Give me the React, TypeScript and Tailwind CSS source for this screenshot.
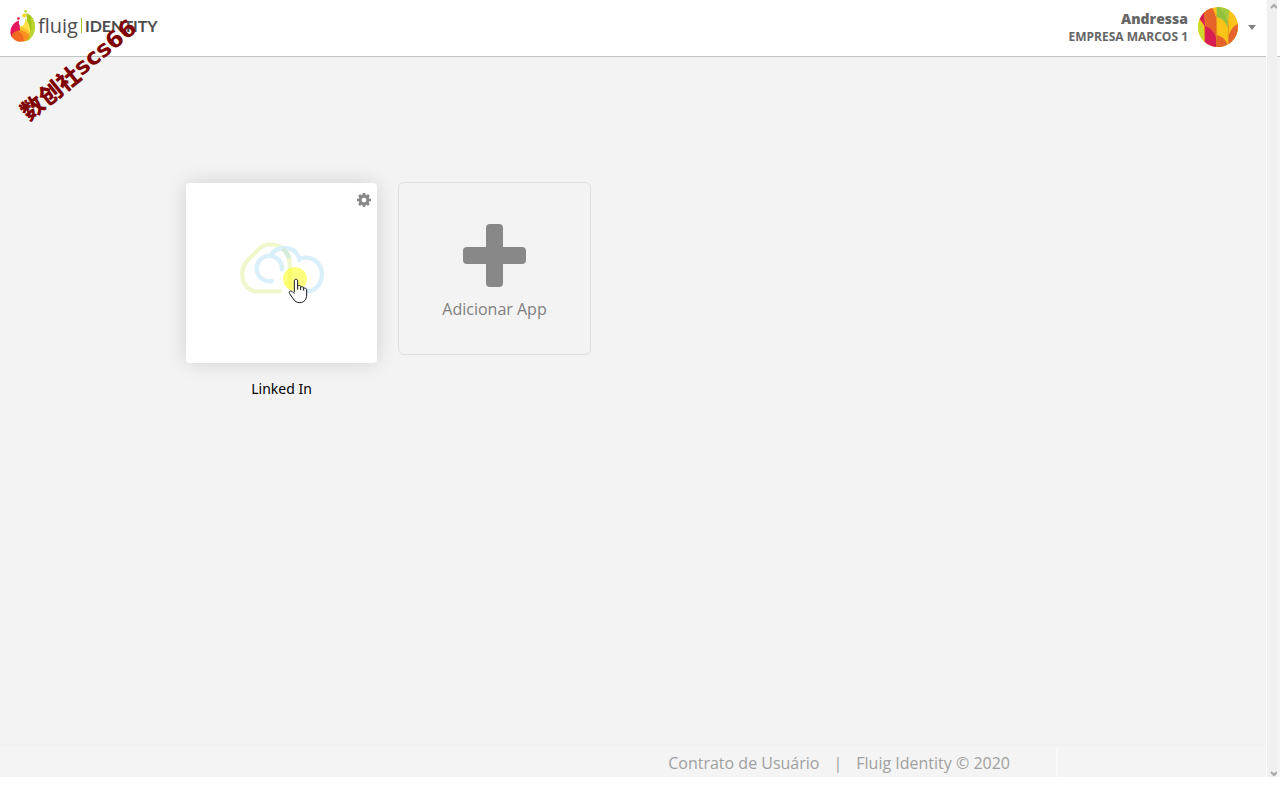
import type { ReactNode } from 'react';

const Logo = () => (
  <a href="#" className="flex items-center gap-[3px] pb-[3px]" aria-label="fluig identity">
    <svg viewBox="13 10 75 100" className="w-[25px] h-[33px]" aria-hidden="true">
      <path d="M62 22c17 6 26 21 26 40 0 24-12 40-28 46l-8-30 12-32z" fill="#a2c617" />
      <path d="M74 32c9 8 14 18 14 32 0 20-10 36-22 42 12-22 16-48 8-74z" fill="#bdd62f" />
      <path d="M40 45c-16 6-26 18-26 36 0 6 2 11 5 15l34-20c-8-8-15-18-13-31z" fill="#e6175c" />
      <path d="M58 38c10 10 17 28 16 44l-22 6-10-20c0-5 4-8 9-7 6-5 8-13 7-23z" fill="#ffe04a" />
      <path d="M46 64c8 2 22 10 28 18-1 13-9 23-22 27-8-12-12-28-6-45z" fill="#fdc02f" />
      <path d="M17 90c4-9 12-14 22-14 14 0 22 10 22 20 0 6-3 11-7 12-16 4-32-3-37-18z" fill="#f26a21" />
      <path d="M36 76c14-3 27 4 36 14-3 10-9 16-18 19 2-14-4-26-18-33z" fill="#f9931e" />
      <circle cx="60" cy="17" r="4" fill="#bdd62f" />
      <circle cx="56" cy="30" r="6" fill="#ffd21f" />
      <circle cx="38" cy="39" r="4" fill="#e6175c" />
    </svg>
    <span className="flex items-center text-[#4d4d4f]">
      <span className="text-[20px] leading-7 font-medium">fluig</span>
      <span className="w-px h-[15px] mx-[3px] bg-[#a2c617]" />
      <span className="font-['Lato'] font-bold text-base leading-6">IDENTITY</span>
    </span>
  </a>
);

const Avatar = () => (
  <svg viewBox="0 0 120 120" className="size-10 rounded-full" aria-hidden="true">
    <rect width="120" height="120" fill="#fcc419" />
    <path d="M0 36c12 16 20 34 20 60v24H0z" fill="#c9dc2c" />
    <path d="M4 36 18 12l4 50c-4-8-10-18-18-26z" fill="#d81e55" />
    <path d="M16 14 40 0c8 10 15 26 16 46v60L20 70c4-22 2-40-4-56z" fill="#e6642a" />
    <path d="M20 56c22 8 35 26 36 48v16H20z" fill="#d81e55" />
    <path d="M56 0h10c18 18 25 42 25 68C86 48 72 34 56 30z" fill="#93c13d" />
    <path d="M62 0h38c-7 8-9 16-9 68C90 40 80 16 62 0z" fill="#a3cb3f" />
    <path d="M91 42c2-14 8-24 17-30l12 16v24c-14 6-25 16-29 30z" fill="#fcc419" />
    <path d="M56 30c20 6 33 20 35 44v22C86 84 72 72 56 66z" fill="#fcc419" />
    <path d="M91 96c1-20 12-38 29-46v70H91z" fill="#e6642a" />
    <path d="M56 84c18 6 28 12 35 36H56z" fill="#e6642a" />
    <path d="M91 42v54M56 24v90M20 60v50" stroke="#e08a1c" strokeWidth="2" />
  </svg>
);

const Cog = () => (
  <svg viewBox="0 128 1536 1536" className="size-[14px]" fill="currentColor" aria-hidden="true">
    <path d="M1024 896q0-106-75-181t-181-75-181 75-75 181 75 181 181 75 181-75 75-181zm512-109v222q0 12-8 23t-20 13l-185 28q-19 54-39 91 35 50 107 138 10 12 10 25t-9 23q-27 37-99 108t-94 71q-12 0-26-9l-138-108q-44 23-91 38-16 136-29 186-7 28-36 28h-222q-14 0-24.5-8.5t-11.5-21.5l-28-184q-49-16-90-37l-141 107q-10 9-25 9-14 0-25-11-126-114-165-168-7-10-7-23 0-12 8-23 15-21 51-66.5t54-70.5q-27-50-41-99l-183-27q-13-2-21-12.5t-8-23.5v-222q0-12 8-23t19-13l186-28q14-46 39-92-40-57-107-138-10-12-10-24 0-10 9-23 26-36 98.5-107.5t94.5-71.5q13 0 26 10l138 107q44-23 91-38 16-136 29-186 7-28 36-28h222q14 0 24.5 8.5t11.5 21.5l28 184q49 16 90 37l142-107q9-9 24-9 13 0 25 10 129 119 165 170 7 8 7 22 0 12-8 23-15 21-51 66.5t-54 70.5q26 50 41 98l183 28q13 2 21 12.5t8 23.5z" />
  </svg>
);

const Clouds = () => (
  <svg viewBox="30 36 252 156" className="w-[84px] h-[52px]" fill="none" strokeWidth="13" strokeLinecap="round" aria-hidden="true">
    <path d="M149 184H82c-28 0-45-22-45-52 0-20 7-32 18-43l32-32c9-9 20-14 34-14 34 0 58 25 58 58v70" stroke="#f1f7cd" />
    <path d="M156 119A38 38 0 1 0 125 153" stroke="#d9eff9" />
    <path d="M121 78c8-15 24-24 44-24 22 0 37 13 44 34 5-4 10-5 18-5 28 0 49 22 49 50 0 27-18 48-42 51" stroke="#d9eff9" />
    <path d="M158 55c9 8 16 18 19 30" stroke="#d3ebdb" strokeLinecap="butt" />
  </svg>
);

// highlighted pointer that rests on the hovered app
const Pointer = () => (
  <svg viewBox="156 108 78 114" className="absolute left-24 top-[83px] w-[26px] h-[38px]" aria-hidden="true">
    <circle cx="195" cy="147" r="36" fill="#ffff00" fillOpacity="0.5" />
    <path
      d="M193 187v-34c0-7 10-7 10 0v15c3-3 9-2 9 2 3-3 9-2 9 2 4-2 9 0 9 4v19c0 13-8 23-21 23-9 0-14-4-19-11l-11-16c-4-7 2-10 7-7z"
      fill="#fff"
      fillOpacity="0.9"
    />
    <path
      d="M193 187v-34c0-7 10-7 10 0v26m0-11c3-3 9-2 9 2v10m0-8c3-3 9-2 9 2v8m0-7c4-2 9 0 9 4v16c0 13-8 23-21 23-9 0-14-4-19-11l-11-16c-4-7 2-10 7-7l7 7"
      fill="none"
      stroke="#14141e"
      strokeWidth="3"
      strokeLinejoin="round"
    />
  </svg>
);

const AppTile = ({ name, children }: { name: string; children: ReactNode }) => (
  <div className="w-[191px] flex flex-col items-center gap-4">
    <div className="relative w-full h-[180px] pb-[10px] rounded bg-white shadow-[0_0_20px_rgba(0,0,0,0.14)] flex items-center justify-center">
      {children}
      <button type="button" aria-label="Configurar" className="absolute top-[10px] right-[6px] text-[#888]">
        <Cog />
      </button>
    </div>
    <span className="text-sm text-black font-['Noto_Sans','Open_Sans',sans-serif]">{name}</span>
  </div>
);

export default function App() {
  return (
    <div className="relative min-h-screen flex flex-col bg-white pb-[23px] font-['Open_Sans',sans-serif]">
      <div className="flex-1 flex">
        <div className="flex-1 flex flex-col bg-[#f3f3f3]">
          <header className="h-[57px] px-[10px] pb-[2px] flex items-center justify-between bg-white border-b border-[#c4c4c4]">
            <Logo />
            <button type="button" className="flex items-center gap-[10px] text-[#666]">
              <span className="flex flex-col pt-[2px] text-right font-bold">
                <span className="text-sm leading-[18px] font-extrabold">Andressa</span>
                <span className="text-xs leading-[18px]">EMPRESA MARCOS 1</span>
              </span>
              <Avatar />
              <svg viewBox="0 0 8 5" className="w-2 h-[5px]" aria-hidden="true">
                <path d="M0 0h8L4 5z" fill="#808080" />
              </svg>
            </button>
          </header>

          <main className="flex-1 w-full max-w-[894px] mx-auto pt-[126px] flex items-start gap-[21px]">
            <AppTile name="Linked In">
              <Clouds />
              <Pointer />
            </AppTile>
            <button
              type="button"
              className="w-[193px] h-[173px] -mt-px flex flex-col items-center pt-[41px] gap-[10px] rounded-md border border-[#dfdfdf] text-[#808080]"
            >
              <svg viewBox="0 0 63 63" className="size-[63px]" fill="#888" aria-hidden="true">
                <rect x="23" width="17" height="63" rx="4" />
                <rect y="23" width="63" height="17" rx="4" />
              </svg>
              <span className="text-base">Adicionar App</span>
            </button>
          </main>

          <footer className="h-8 pt-[2px] bg-[#f4f4f4] border-t border-[#f0f0f0] text-base text-[#a0a0a0]">
            <div className="w-full max-w-[850px] h-full mx-auto pr-[46px] flex items-center justify-end gap-[14px] border-r-2 border-[#fafafa]">
              <a href="#">Contrato de Usuário</a>
              <span>|</span>
              <span>Fluig Identity © 2020</span>
            </div>
          </footer>
        </div>

        {/* scrollbar */}
        <div className="w-[14px] flex bg-white pl-px">
          <div className="w-[10px] flex flex-col justify-between bg-[#f0f0f0] text-[#a6a6a6]">
            <svg viewBox="0 0 10 10" className="size-[10px]" fill="none" stroke="currentColor" strokeWidth="2" aria-hidden="true">
              <path d="M4 8l3-3 3 3" />
            </svg>
            <svg viewBox="0 0 10 6" className="w-[10px] h-[6px]" fill="none" stroke="currentColor" strokeWidth="2" aria-hidden="true">
              <path d="M4 1l3 3 3-3" />
            </svg>
          </div>
          <div className="flex-1 flex flex-col">
            <div className="h-[57px] border-b border-[#c4c4c4]" />
            <div className="flex-1 bg-[#f4f4f4]" />
          </div>
        </div>
      </div>

      {/* watermark */}
      <div className="absolute left-[7px] top-[55px] -rotate-39 whitespace-nowrap flex items-center leading-7 font-bold text-[#800000]">
        <span className="text-[23px] font-['Noto_Sans_CJK_SC',sans-serif] font-black">数创社</span>
        <span className="text-[23px] font-['DejaVu_Sans',sans-serif]">scs66</span>
      </div>
    </div>
  );
}
